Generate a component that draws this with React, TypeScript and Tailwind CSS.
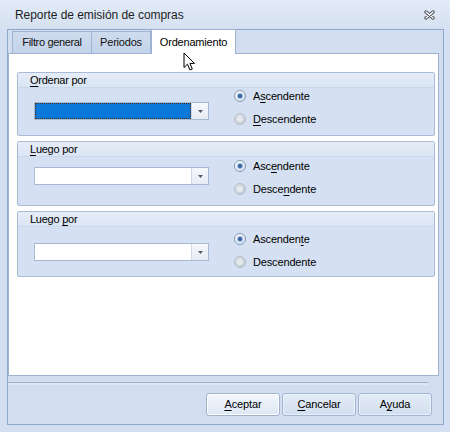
import React from "react";

const F = "font-['Liberation_Sans',Arial,sans-serif]";

function Combo({ selected }: { selected?: boolean }) {
  return (
    <div className="flex w-[175px] h-[18px] border border-[#a6b9d5] bg-white">
      <div className="flex-1 h-full">
        {selected && (
          <div className="h-full bg-[#0a78d8] border border-dotted border-[#4a3210]" />
        )}
      </div>
      <div className="w-[17px] h-full border-l border-[#cfd9e7] bg-gradient-to-b from-[#f6f8fb] to-[#e6ecf4] flex items-center justify-center">
        <svg width="5" height="3" viewBox="0 0 5 3">
          <path d="M0 0H5L2.5 3Z" fill="#4d5b6e" />
        </svg>
      </div>
    </div>
  );
}

function Radio({ checked }: { checked?: boolean }) {
  return checked ? (
    <span className="w-[12px] h-[12px] rounded-full border border-[#8097b7] bg-gradient-to-br from-[#ffffff] to-[#d9e2ee] flex items-center justify-center shrink-0">
      <span className="w-[4px] h-[4px] rounded-full bg-[#34609c] shadow-[0_0_0_1px_#9ab8de]" />
    </span>
  ) : (
    <span className="w-[12px] h-[12px] rounded-full border border-[#b3bdca] bg-gradient-to-br from-[#dde1e7] to-[#c2c9d3] flex items-center justify-center shrink-0">
      <span className="w-[6px] h-[6px] rounded-full bg-[#e6e9ed]" />
    </span>
  );
}

function RadioRow({ checked, children }: { checked?: boolean; children: React.ReactNode }) {
  return (
    <div className="h-[14px] flex items-center gap-[7px] tracking-[-0.15px]">
      <Radio checked={checked} />
      <span className="leading-[14px]">{children}</span>
    </div>
  );
}

function Group({
  title,
  h,
  comboTop,
  radioTop,
  selected,
  asc,
  desc,
}: {
  title: React.ReactNode;
  h: string;
  comboTop: string;
  radioTop: string;
  selected?: boolean;
  asc: React.ReactNode;
  desc: React.ReactNode;
}) {
  return (
    <div className={`ml-[8px] w-[418px] ${h} border border-[#a8bcd8] rounded-[2px] bg-[#d5e1f2] flex flex-col`}>
      <div className="h-[15px] leading-[15px] pl-[12px] bg-gradient-to-b from-[#e6edf8] to-[#dae5f4] border-b border-[#cbd8ea] tracking-[-0.25px]">
        {title}
      </div>
      <div className="flex">
        <div className={`ml-[16px] ${comboTop}`}>
          <Combo selected={selected} />
        </div>
        <div className={`ml-[25px] flex flex-col gap-[9px] ${radioTop}`}>
          <RadioRow checked>{asc}</RadioRow>
          <RadioRow>{desc}</RadioRow>
        </div>
      </div>
    </div>
  );
}

function Btn({ children, def }: { children: React.ReactNode; def?: boolean }) {
  return (
    <div
      className={
        def
          ? "w-[74px] h-[23px] rounded-[3px] border border-[#9fb3cf] flex items-center justify-center bg-gradient-to-b from-[#f3f7fc] to-[#dde7f4] shadow-[inset_0_0_0_1px_#ffffff]"
          : "w-[74px] h-[23px] rounded-[3px] border border-[#a3b6d2] flex items-center justify-center bg-gradient-to-b from-[#e4ecf7] to-[#d2deef] shadow-[inset_0_0_0_1px_#e9f0f9]"
      }
    >
      <span className="tracking-[-0.1px]">{children}</span>
    </div>
  );
}

export default function App() {
  return (
    <div className={`relative w-[450px] h-[432px] overflow-hidden bg-[#d4e0f1] text-[11px] text-black ${F}`}>
      {/* Title bar */}
      <div className="h-[29px] flex items-center justify-between pl-[15px] pr-[15px] bg-gradient-to-b from-[#e3ebf7] to-[#d4e0f1]">
        <span className="text-[12px] text-[#1e1e1e] tracking-[-0.05px]">Reporte de emisión de compras</span>
        <svg width="11" height="10" viewBox="0 0 11 10">
          <path d="M2 2L9 8M9 2L2 8" stroke="#4a4f57" strokeWidth="3.4" strokeLinecap="round" />
          <path d="M2 2L9 8M9 2L2 8" stroke="#ffffff" strokeWidth="1.4" strokeLinecap="round" />
        </svg>
      </div>

      {/* Frame */}
      <div className="ml-[7px] w-[437px] h-[396px] border border-[#8ea8cb] bg-[#d2def0] flex flex-col">
        <div className="w-[431px] flex flex-col">
          {/* Tabs */}
          <div className="h-[24px] flex items-end">
            <div className="w-[4px] h-full border-b border-[#9db2cf]" />
            <div className="w-[80px] h-[23px] border border-[#9fb4d2] bg-gradient-to-b from-[#cfdcee] to-[#c3d3ea] flex items-center justify-center tracking-[-0.35px] text-[#111]">
              Filtro general
            </div>
            <div className="w-[59px] h-[23px] border border-l-0 border-[#9fb4d2] bg-gradient-to-b from-[#cfdcee] to-[#c3d3ea] flex items-center justify-center tracking-[-0.2px] text-[#111]">
              Periodos
            </div>
            <div className="w-[85px] h-[25px] border border-b-0 border-[#9db2cf] bg-white flex items-center justify-center pt-[1px] tracking-[-0.2px]">
              Ordenamiento
            </div>
            <div className="flex-1 h-full border-b border-[#9db2cf]" />
          </div>
          {/* Page */}
          <div className="h-[322px] bg-white border border-t-0 border-[#9db2cf] flex flex-col">
            <div className="h-[18px]" />
            <Group
              h="h-[64px]"
              comboTop="mt-[14px]"
              radioTop="mt-[1px]"
              selected
              title={
                <>
                  <u className="underline-offset-[2px]">O</u>rdenar por
                </>
              }
              asc={
                <>
                  A<u className="underline-offset-[2px]">s</u>cendente
                </>
              }
              desc={
                <>
                  <u className="underline-offset-[2px]">D</u>escendente
                </>
              }
            />
            <div className="h-[5px]" />
            <Group
              h="h-[65px]"
              comboTop="mt-[10px]"
              radioTop="mt-[2px]"
              title={
                <>
                  <u className="underline-offset-[2px]">L</u>uego por
                </>
              }
              asc={
                <>
                  Asc<u className="underline-offset-[2px]">e</u>ndente
                </>
              }
              desc={
                <>
                  Desce<u className="underline-offset-[2px]">n</u>dente
                </>
              }
            />
            <div className="h-[5px]" />
            <Group
              h="h-[66px]"
              comboTop="mt-[16px]"
              radioTop="mt-[5px]"
              title={
                <>
                  Luego <u className="underline-offset-[2px]">p</u>or
                </>
              }
              asc={
                <>
                  Ascenden<u className="underline-offset-[2px]">t</u>e
                </>
              }
              desc={<>Descendente</>}
            />
          </div>
        </div>
        {/* Separator */}
        <div className="mt-[6px] w-[420px] h-[3px] border-t border-[#a4b1c3] bg-[#dfe7f2]" />
        {/* Buttons */}
        <div className="mt-[8px] flex justify-end gap-[2px] pr-[11px]">
          <Btn def>
            <u className="underline-offset-[2px]">A</u>ceptar
          </Btn>
          <Btn>
            <u className="underline-offset-[2px]">C</u>ancelar
          </Btn>
          <Btn>
            A<u className="underline-offset-[2px]">y</u>uda
          </Btn>
        </div>
      </div>

      {/* Mouse cursor */}
      <svg className="absolute left-[183px] top-[52px]" width="13" height="20" viewBox="0 0 13 20">
        <path
          d="M1 1L1 15.5L4.5 12.2L7 18L9.3 17L6.9 11.4L11.5 11.4Z"
          fill="#ffffff"
          stroke="#000000"
          strokeWidth="1"
          strokeLinejoin="round"
        />
      </svg>
    </div>
  );
}
